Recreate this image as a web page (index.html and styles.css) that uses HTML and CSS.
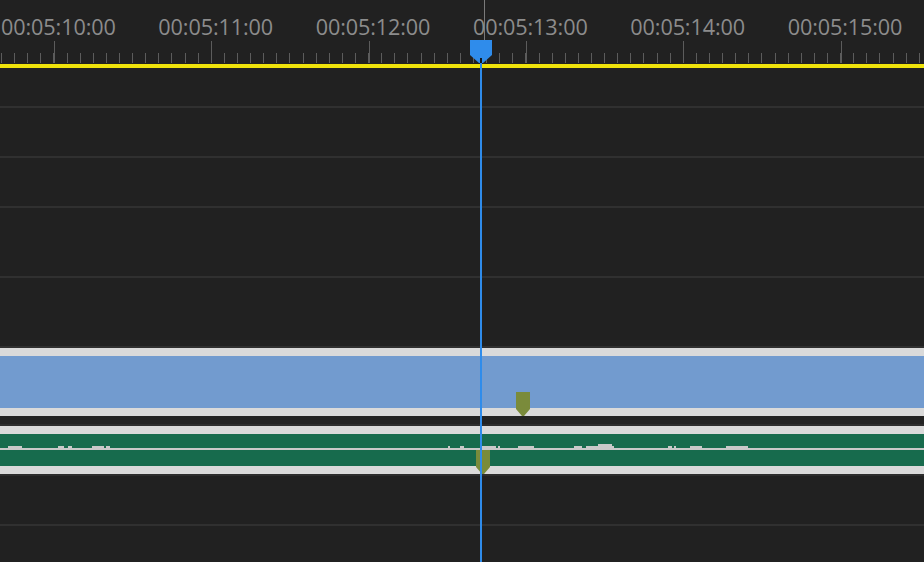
FILE: index.html
```html
<!DOCTYPE html>
<html lang="en">
<head>
<meta charset="utf-8">
<title>Timeline</title>
<link rel="stylesheet" href="styles.css">
</head>
<body>
<div class="timeline">
  <div class="ruler">
    <div class="labels">
      <span class="label">00:05:10:00</span>
      <span class="label">00:05:11:00</span>
      <span class="label">00:05:12:00</span>
      <span class="label">00:05:13:00</span>
      <span class="label">00:05:14:00</span>
      <span class="label">00:05:15:00</span>
    </div>
    <div class="ticks"></div>
  </div>
  <div class="work-bar"></div>
  <div class="tracks">
    <div class="track h38"></div>
    <div class="track h48"></div>
    <div class="track h48"></div>
    <div class="track h68"></div>
    <div class="track h68"></div>
    <div class="track video-track">
      <div class="clip video-clip">
        <div class="cap"></div>
        <div class="video-body"></div>
        <div class="cap"></div>
        <div class="marker" style="left:516px;top:44px"></div>
      </div>
    </div>
    <div class="track audio-track">
      <div class="clip audio-clip">
        <div class="cap"></div>
        <div class="wave-top">
          <i class="peak" style="left:8px;width:14px"></i>
          <i class="peak" style="left:58px;width:6px"></i>
          <i class="peak" style="left:68px;width:4px"></i>
          <i class="peak" style="left:92px;width:12px"></i>
          <i class="peak" style="left:106px;width:4px"></i>
          <i class="peak" style="left:448px;width:2px"></i>
          <i class="peak" style="left:460px;width:4px"></i>
          <i class="peak" style="left:482px;width:14px"></i>
          <i class="peak" style="left:498px;width:2px"></i>
          <i class="peak" style="left:518px;width:16px"></i>
          <i class="peak" style="left:574px;width:8px"></i>
          <i class="peak" style="left:586px;width:12px"></i>
          <i class="peak tall" style="left:598px;width:14px"></i>
          <i class="peak" style="left:612px;width:2px"></i>
          <i class="peak" style="left:668px;width:4px"></i>
          <i class="peak" style="left:674px;width:2px"></i>
          <i class="peak" style="left:690px;width:12px"></i>
          <i class="peak" style="left:726px;width:22px"></i>
        </div>
        <div class="wave-line"></div>
        <div class="wave-bottom"></div>
        <div class="cap"></div>
        <div class="marker" style="left:476px;top:24px"></div>
      </div>
    </div>
    <div class="track h48"></div>
    <div class="track rest"></div>
  </div>

  <div class="hover-line"></div>
  <div class="playhead">
    <div class="handle"><span class="notch"></span></div>
    <div class="line"></div>
  </div>
</div>
</body>
</html>
```

FILE: styles.css
```css
html, body {
  margin: 0;
  padding: 0;
  height: 100%;
  background: #212121;
  overflow: hidden;
}

.timeline {
  position: relative;
  height: 562px;
  display: flex;
  flex-direction: column;
  background: #212121;
  font-family: "Open Sans", "Liberation Sans", sans-serif;
}

.ruler {
  height: 64px;
  display: flex;
  flex-direction: column;
}

.labels {
  display: flex;
  padding-top: 15px;
  padding-left: 1px;
  height: 26px;
  white-space: nowrap;
}

.label {
  flex: 0 0 157.333px;
  font-size: 21.6px;
  font-weight: 500;
  line-height: 24px;
  color: #8c8c8c;
  letter-spacing: -0.1px;
}

.ticks {
  height: 23px;
  background:
    repeating-linear-gradient(to right, #5c5c5c 0 1px, transparent 1px 157.333px) 54px 0 / 100% 22px no-repeat,
    repeating-linear-gradient(to right, #5c5c5c 0 1px, transparent 1px 13.111px) 1px 12px / 100% 10px no-repeat;
}

.work-bar {
  height: 4px;
  background: #efe30b;
}

.tracks {
  flex: 1;
  display: flex;
  flex-direction: column;
}

.track {
  position: relative;
  border-bottom: 2px solid #303030;
  background: #212121;
}

.h38 { height: 38px; }
.h48 { height: 48px; }
.h68 { height: 68px; }
.rest { flex: 1; border-bottom: 0; }

.video-track {
  height: 76px;
  background: #232323;
  border-bottom-color: #2d2d2d;
}

.audio-track {
  height: 48px;
  border-bottom-color: #2d2d2d;
}

.clip {
  position: relative;
  display: flex;
  flex-direction: column;
}

.cap {
  height: 8px;
  background: #dadada;
}

.video-body {
  height: 52px;
  background: #729bcf;
}

.wave-top {
  position: relative;
  height: 14px;
  background: #176b4d;
}

.wave-line {
  height: 2px;
  background: #c9c9c9;
}

.wave-bottom {
  height: 16px;
  background: #176b4d;
}

.peak {
  position: absolute;
  bottom: 0;
  height: 2px;
  background: #c9c9c9;
}

.peak.tall {
  height: 4px;
}

.marker {
  position: absolute;
  width: 14px;
  height: 24px;
  background: #7a8b3b;
  clip-path: polygon(0 0, 100% 0, 100% 17px, 8px 24px, 6px 24px, 0 17px);
}

.hover-line {
  position: absolute;
  left: 484px;
  top: 0;
  width: 1px;
  height: 40px;
  background: #7a7a7a;
}

.playhead {
  position: absolute;
  left: 470px;
  top: 40px;
  bottom: 0;
  width: 22px;
  display: flex;
  flex-direction: column;
  align-items: center;
}

.handle {
  position: relative;
  width: 22px;
  height: 23px;
  flex: none;
  background: #2f8ceb;
  clip-path: polygon(0 0, 100% 0, 100% 15px, 13px 23px, 9px 23px, 0 15px);
}

.notch {
  position: absolute;
  left: 10px;
  top: 18px;
  width: 2px;
  height: 5px;
  background: #101820;
}

.line {
  flex: 1;
  width: 2px;
  background: #2f8ceb;
}
```
